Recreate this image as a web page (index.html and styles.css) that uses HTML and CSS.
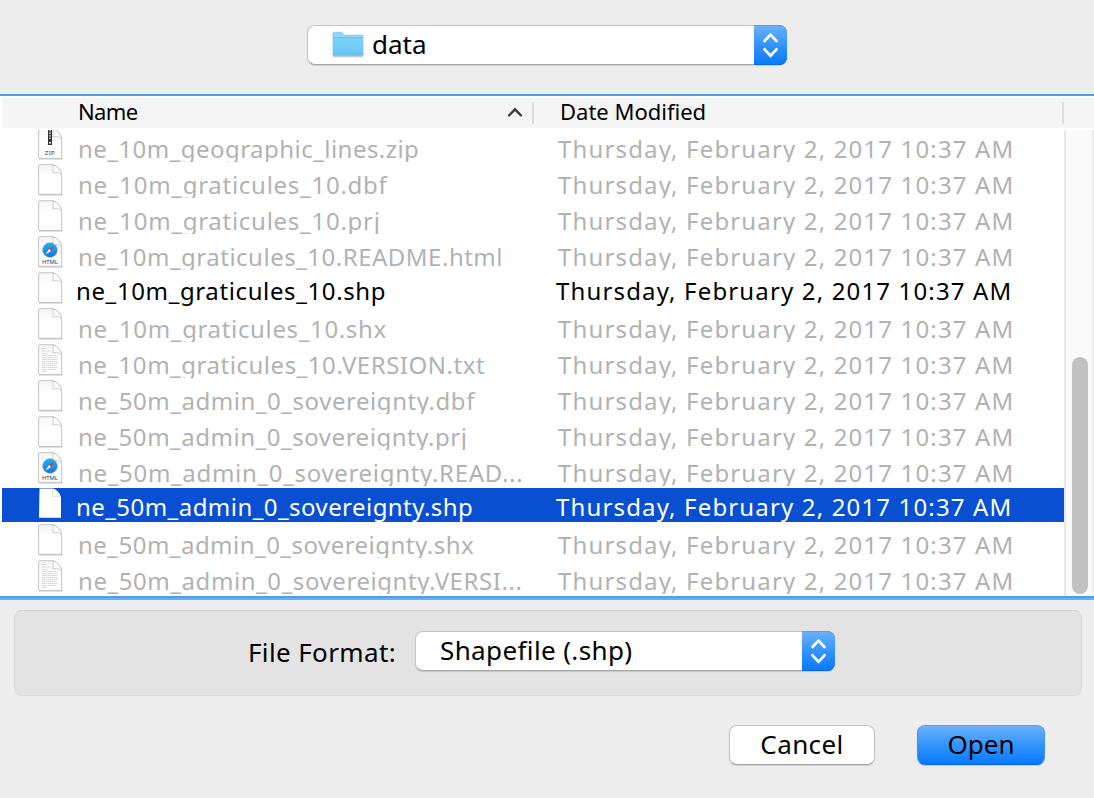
FILE: index.html
```
<!DOCTYPE html>
<html lang="en">
<head>
<meta charset="utf-8">
<title>Open</title>
<link rel="stylesheet" href="styles.css">
</head>
<body>
<svg class="defs" width="0" height="0">
  <defs>
    <linearGradient id="paper" x1="0" y1="0" x2="0" y2="1"><stop offset="0" stop-color="#f4f4f4"/><stop offset=".45" stop-color="#fff"/></linearGradient>
    <linearGradient id="sky" x1="0" y1="0" x2="0" y2="1"><stop offset="0" stop-color="#20b4f5"/><stop offset="1" stop-color="#1b6fe0"/></linearGradient>
    <linearGradient id="folder" x1="0" y1="0" x2="0" y2="1"><stop offset="0" stop-color="#7dd2f8"/><stop offset="1" stop-color="#66c7f5"/></linearGradient>
    <symbol id="page" viewBox="0 0 26 33">
      <path d="M1 30.800h23.500" stroke="#b4b4b4" stroke-width="1.200"/>
      <path d="M1.900.700H15.200C19 1.500 22.800 6 23.600 10V30.300H.600V2Q.600.700 1.900.700Z" fill="url(#paper)" stroke="#c6c6c6"/>
      <path d="M14.500 1C15.500 3 15.300 6 14.800 9C17.500 8.300 21.500 8.500 23.500 10.500C22.800 6 18.500 1.500 14.500 1Z" fill="#fbfbfb" stroke="#c9c9c9" stroke-width=".9"/>
    </symbol>
    <symbol id="page-white" viewBox="0 0 26 33">
      <path d="M1.500.5H15C19 1.500 22.600 6 23 10V29.800H1Z" fill="#fff"/>
      <path d="M14.500 1.500V8.500H21.500" fill="none" stroke="#ddd" stroke-width=".8"/>
    </symbol>
    <symbol id="zip" viewBox="0 0 26 33">
      <use href="#page"/>
      <path d="M12 1V17" stroke="#333" stroke-width="4"/>
      <path d="M12 2V12" stroke="#c5dbe0" stroke-width="1.800" stroke-dasharray="1.300 1.300"/>
      <circle cx="12" cy="14.700" r="1" fill="#fff"/>
      <text x="12" y="27.300" class="tag tag-zip" text-anchor="middle">ZIP</text>
    </symbol>
    <symbol id="html" viewBox="0 0 26 33">
      <use href="#page"/>
      <circle cx="12" cy="14" r="7.900" fill="#b9cbd6"/>
      <circle cx="12" cy="14" r="7.200" fill="url(#sky)"/>
      <path d="M16.500 9.500L13 15L11 13Z" fill="#e8372e"/>
      <path d="M7.500 18.500L11 13L13 15Z" fill="#fff"/>
      <text x="12" y="27.700" class="tag" text-anchor="middle">HTML</text>
    </symbol>
    <symbol id="txt" viewBox="0 0 26 33">
      <use href="#page"/>
      <path d="M4 4.500H8M4 7H12M4 9.500H9M4 11.500H18M4 13.500H20M4 15.500H19M4 17.500H20M4 19.500H20M4 21.500H17M4 23.500H20M4 25.500H18M4 27.500H9" stroke="#cbcbcb" stroke-width=".8" stroke-dasharray="3 .6 2 .4"/>
    </symbol>
    <symbol id="arrows" viewBox="0 0 33 40">
      <path d="M10.500 16L16.500 9.600L22.500 16M10.500 24.300L16.500 30.700L22.500 24.300" fill="none" stroke="#fff" stroke-width="2.700" stroke-linecap="round"/>
    </symbol>
  </defs>
</svg>

<main class="dialog">
  <div class="location">
    <div class="combo combo-path">
      <svg class="folder" viewBox="0 0 32 27">
        <path d="M1 25.500H31" stroke="#9aa" stroke-width="1.500" opacity=".6"/>
        <path d="M1 3Q1 1.300 2.500 1.300H9.500L12.500 4.200H30Q31 4.200 31 5.500V24.500H1Z" fill="#8cd9fb" stroke="#65b6de" stroke-width=".6"/>
        <path d="M1 7H31V24.500H1Z" fill="url(#folder)"/>
        <path d="M1 6.500H31M1 22.700H31" stroke="#58bce9" stroke-width=".8"/>
      </svg>
      <span class="combo-text path-text">data</span>
      <span class="stepper"><svg><use href="#arrows"/></svg></span>
    </div>
  </div>

  <section class="browser">
    <div class="head">
      <div class="col-name"><span class="h-name">Name</span>
        <svg class="sort" viewBox="0 0 16 10"><path d="M2 8.500L8 2.300L14 8.500" fill="none" stroke="#3c3c3c" stroke-width="2.400" stroke-linecap="round"/></svg>
      </div>
      <div class="col-date"><span class="h-date">Date Modified</span></div>
    </div>
    <div class="body">
      <div class="rows" id="rows"></div>
      <div class="track"><div class="thumb"></div></div>
    </div>
  </section>

  <section class="format">
    <span class="format-label">File Format:</span>
    <div class="combo combo-format">
      <span class="combo-text format-text">Shapefile (.shp)</span>
      <span class="stepper"><svg><use href="#arrows"/></svg></span>
    </div>
  </section>

  <div class="actions">
    <button class="btn cancel"><span>Cancel</span></button>
    <button class="btn open"><span>Open</span></button>
  </div>
</main>
<script src="rows.js"></script>
</body>
</html>
```
FILE: styles.css
```
* { box-sizing: border-box; }
body { margin: 0; background: #ededed; font-family: "Noto Sans", sans-serif; color: #000; }
.defs { position: absolute; }
.dialog { width: 1094px; height: 798px; overflow: hidden; display: flex; flex-direction: column; background: #ededed; }

.location { height: 94px; padding-top: 25px; display: flex; justify-content: center; flex: none; }
.combo { height: 40px; display: flex; align-items: stretch; background: #fff; border: 1px solid #c4c4c4; border-bottom-color: #a5a5a5; border-radius: 8px; box-shadow: 0 1px 1px rgba(0,0,0,.13); }
.combo-path { width: 480px; padding-left: 24px; }
.combo-format { width: 420px; padding-left: 24px; }
.combo-text { flex: 1; font-size: 26px; line-height: 36px; white-space: nowrap; }
.format-text { letter-spacing: .38px; }
.folder { width: 32px; height: 27px; margin: 5px 8px 0 0; flex: none; }
.stepper { width: 33px; height: 40px; margin: -1px -1px -1px 0; border-radius: 0 8px 8px 0; background: linear-gradient(#6bb2fa, #2e91fd 55%, #077aff); box-shadow: inset 0 1px #55a3ef, inset 0 -1px #0a65f2; flex: none; }
.stepper svg { width: 33px; height: 40px; display: block; }

.browser { height: 506px; flex: none; background: #fff; border-top: 2px solid #4f9de0; border-bottom: 2px solid #62b1f8; box-shadow: inset 0 -2px #4f9fe3; }
.head { height: 30px; margin: 2px 0 0 2px; background: #f5f5f5; display: flex; align-items: center; }
.col-name, .col-date { height: 22px; border-right: 2px solid #dcdcdc; display: flex; align-items: center; font-size: 22px; line-height: 30px; white-space: nowrap; }
.col-name { width: 532px; padding: 0 9px 0 76px; justify-content: space-between; }
.col-date { width: 530px; padding-left: 26px; }
.h-name { letter-spacing: -.6px; padding-bottom: 4px; }
.h-date { padding-bottom: 4px; }
.sort { width: 16px; height: 10px; margin-bottom: 2px; }
.body { height: 466px; margin-top: 2px; display: flex; overflow: hidden; }
.rows { width: 1062px; margin: -2px 0 0 2px; flex: none; }
.row { height: 34px; margin-bottom: 2px; display: flex; overflow: hidden; font-size: 24px; line-height: 41px; color: #b2b2b2; white-space: pre; }
.row svg { width: 26px; height: 33px; margin: 0 14px 0 36px; flex: none; }
.row .name { width: 480px; flex: none; }
.row .date { letter-spacing: 1.150px; }
.row.enabled { color: #000; }
.row.selected { color: #fff; background: #084fd1; }
.enabled .name, .selected .name { margin-left: -2px; width: 480px; }
.enabled, .selected { line-height: 37px; }
.track { flex: 1; background: #fafafa; border-left: 2px solid #e8e8e8; border-right: 2px solid #ececec; padding: 227px 4px 2px 6px; }
.thumb { width: 16px; height: 237px; border-radius: 8px; background: #c1c1c1; }
.tag { font: 5.800px "Noto Sans", sans-serif; fill: #333; }
.tag-zip { font-size: 6px; letter-spacing: .4px; }

.format { width: 1068px; height: 86px; margin: 10px 0 0 14px; padding: 20px 0 0 233px; flex: none; display: flex; background: #e3e3e3; border: 1px solid #dbdbdb; border-top-color: #d1d1d1; border-radius: 8px; }
.format-label { width: 167px; font-size: 26px; line-height: 43px; letter-spacing: .38px; white-space: nowrap; }

.actions { display: flex; gap: 42px; margin: 29px 0 0 729px; }
.btn { height: 40px; padding: 0 0 2px; border-radius: 8px; font: 26px/36px "Noto Sans", sans-serif; color: #000; box-shadow: 0 1px 1px rgba(0,0,0,.13); }
.cancel { width: 146px; background: #fff; border: 1px solid #c4c4c4; border-bottom-color: #a5a5a5; letter-spacing: .4px; }
.open { width: 128px; background: linear-gradient(#6bb2fa, #2e91fd 55%, #077aff); border: 1px solid #3b93f2; border-top-color: #55a3ef; border-bottom-color: #0a65f2; }
```
FILE: rows.js
```
// icon, file name, tracking in px, row state
const files = [
  ["zip", "ne_10m_geographic_lines.zip", .46],
  ["page", "ne_10m_graticules_10.dbf", .73],
  ["page", "ne_10m_graticules_10.prj", .73],
  ["html", "ne_10m_graticules_10.README.html", .5],
  ["page", "ne_10m_graticules_10.shp", .62, "enabled"],
  ["page", "ne_10m_graticules_10.shx", .65],
  ["txt", "ne_10m_graticules_10.VERSION.txt", .53],
  ["page", "ne_50m_admin_0_sovereignty.dbf", .55],
  ["page", "ne_50m_admin_0_sovereignty.prj", .53],
  ["html", "ne_50m_admin_0_sovereignty.READ...", .68],
  ["page-white", "ne_50m_admin_0_sovereignty.shp", .45, "selected"],
  ["page", "ne_50m_admin_0_sovereignty.shx", .48],
  ["txt", "ne_50m_admin_0_sovereignty.VERSI...", .57]
];
document.getElementById("rows").innerHTML = files.map(([icon, name, tracking, state = ""]) =>
  `<div class="row ${state}"><svg><use href="#${icon}"/></svg><span class="name" style="letter-spacing:${tracking}px">${name}</span><span class="date">Thursday, February 2, 2017 10:37 AM</span></div>`
).join("");
```
